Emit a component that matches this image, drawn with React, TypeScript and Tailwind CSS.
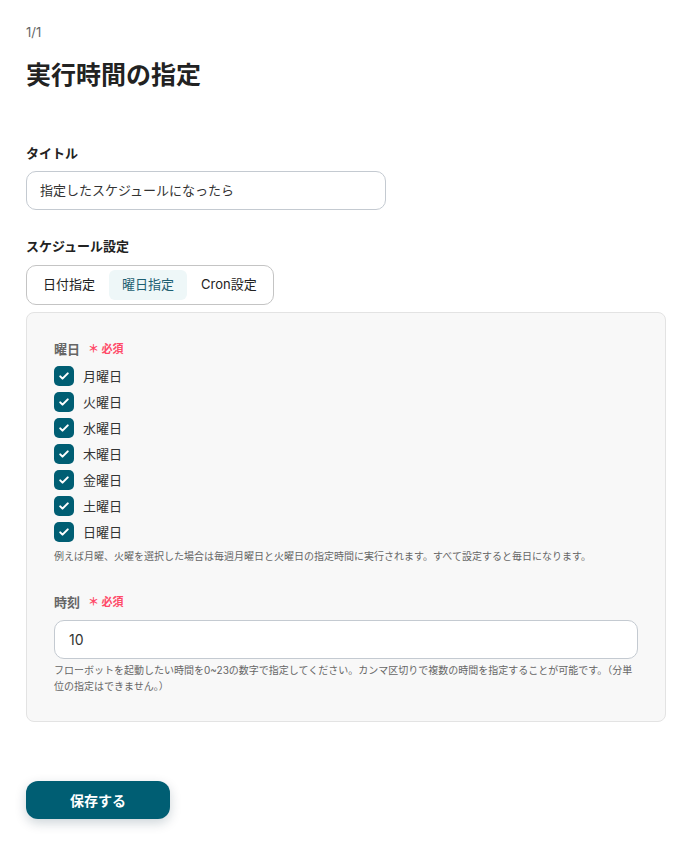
import React, { useState } from 'react';

const days = ['月曜日', '火曜日', '水曜日', '木曜日', '金曜日', '土曜日', '日曜日'];

const Required = () => (
  <span className="ml-2 text-[11px] font-bold text-[#ff4a68]">＊ 必須</span>
);

const CheckBox: React.FC<{ checked: boolean; onClick: () => void }> = ({ checked, onClick }) => (
  <button
    type="button"
    onClick={onClick}
    className={`flex h-5 w-5 items-center justify-center rounded-[5px] ${
      checked ? 'bg-[#005e73]' : 'border border-gray-300 bg-white'
    }`}
  >
    {checked && (
      <svg viewBox="0 0 16 16" className="h-3 w-3" fill="none">
        <path d="M3 8.5l3 3 7-7" stroke="white" strokeWidth="2.8" strokeLinecap="round" strokeLinejoin="round" />
      </svg>
    )}
  </button>
);

export default function App() {
  const [tab, setTab] = useState('week');
  const [checked, setChecked] = useState<boolean[]>(days.map(() => true));

  const tabs = [
    { id: 'date', label: '日付指定' },
    { id: 'week', label: '曜日指定' },
    { id: 'cron', label: 'Cron設定' },
  ];

  return (
    <div
      className="min-h-screen bg-white pl-[26px] pr-[30px] pt-[22px] pb-10 text-[#222]"
      style={{ fontFamily: 'Inter, "Noto Sans CJK JP", sans-serif' }}
    >
      <div className="text-[13px] leading-5 text-[#666]">1/1</div>
      <h1 className="mt-[17px] text-[25px] font-bold leading-8 text-[#222]">実行時間の指定</h1>

      {/* タイトル */}
      <div className="mt-[52px]">
        <div className="text-[13px] font-bold leading-5">タイトル</div>
        <div className="mt-[8px] flex h-[39px] w-[360px] items-center rounded-[10px] border border-[#c4cad1] px-[13px] text-[13px] text-[#333]">
          指定したスケジュールになったら
        </div>
      </div>

      {/* スケジュール設定 */}
      <div className="mt-[26px]">
        <div className="text-[13px] font-bold leading-5">スケジュール設定</div>
        <div className="mt-[9px] inline-flex h-[40px] items-center gap-[1px] rounded-[10px] border border-[#c4c4c4] px-[3px]">
          {tabs.map((t) => (
            <button
              key={t.id}
              type="button"
              onClick={() => setTab(t.id)}
              className={`h-[30px] rounded-[6px] px-[13px] text-[13px] ${
                tab === t.id ? 'bg-[#eef7f8] text-[#1e6072]' : 'text-[#222]'
              }`}
            >
              {t.label}
            </button>
          ))}
        </div>

        <div className="mt-[7px] rounded-lg border border-[#e3e3e3] bg-[#f8f8f8] px-[27px] pt-[26px] pb-[27px]">
          <div className="flex items-center text-[13px] font-bold leading-5 text-[#666]">
            曜日
            <Required />
          </div>
          <div className="mt-[7px] flex flex-col gap-[6px]">
            {days.map((d, i) => (
              <label key={d} className="flex items-center gap-[9px] text-[13px] leading-5 text-[#333]">
                <CheckBox
                  checked={checked[i]}
                  onClick={() => setChecked(checked.map((c, j) => (j === i ? !c : c)))}
                />
                {d}
              </label>
            ))}
          </div>
          <p className="mt-[6px] text-[10px] leading-4 text-[#666]">
            例えば月曜、火曜を選択した場合は毎週月曜日と火曜日の指定時間に実行されます。すべて設定すると毎日になります。
          </p>

          <div className="mt-[28px] flex items-center text-[13px] font-bold leading-5 text-[#666]">
            時刻
            <Required />
          </div>
          <div className="mt-[8px] flex h-[39px] items-center rounded-[10px] border border-[#c4cad1] bg-white px-[14px] text-[14px] text-[#333]">
            10
          </div>
          <p className="mt-[3px] text-[10px] leading-4 text-[#666]">
            フローボットを起動したい時間を0~23の数字で指定してください。カンマ区切りで複数の時間を指定することが可能です。（分単位の指定はできません。）
          </p>
        </div>
      </div>

      <button
        type="button"
        className="mt-[59px] h-[38px] w-[144px] rounded-xl bg-[#005e73] text-[14px] font-bold text-white shadow-[0_4px_12px_rgba(0,40,60,0.2)]"
      >
        保存する
      </button>
    </div>
  );
}
